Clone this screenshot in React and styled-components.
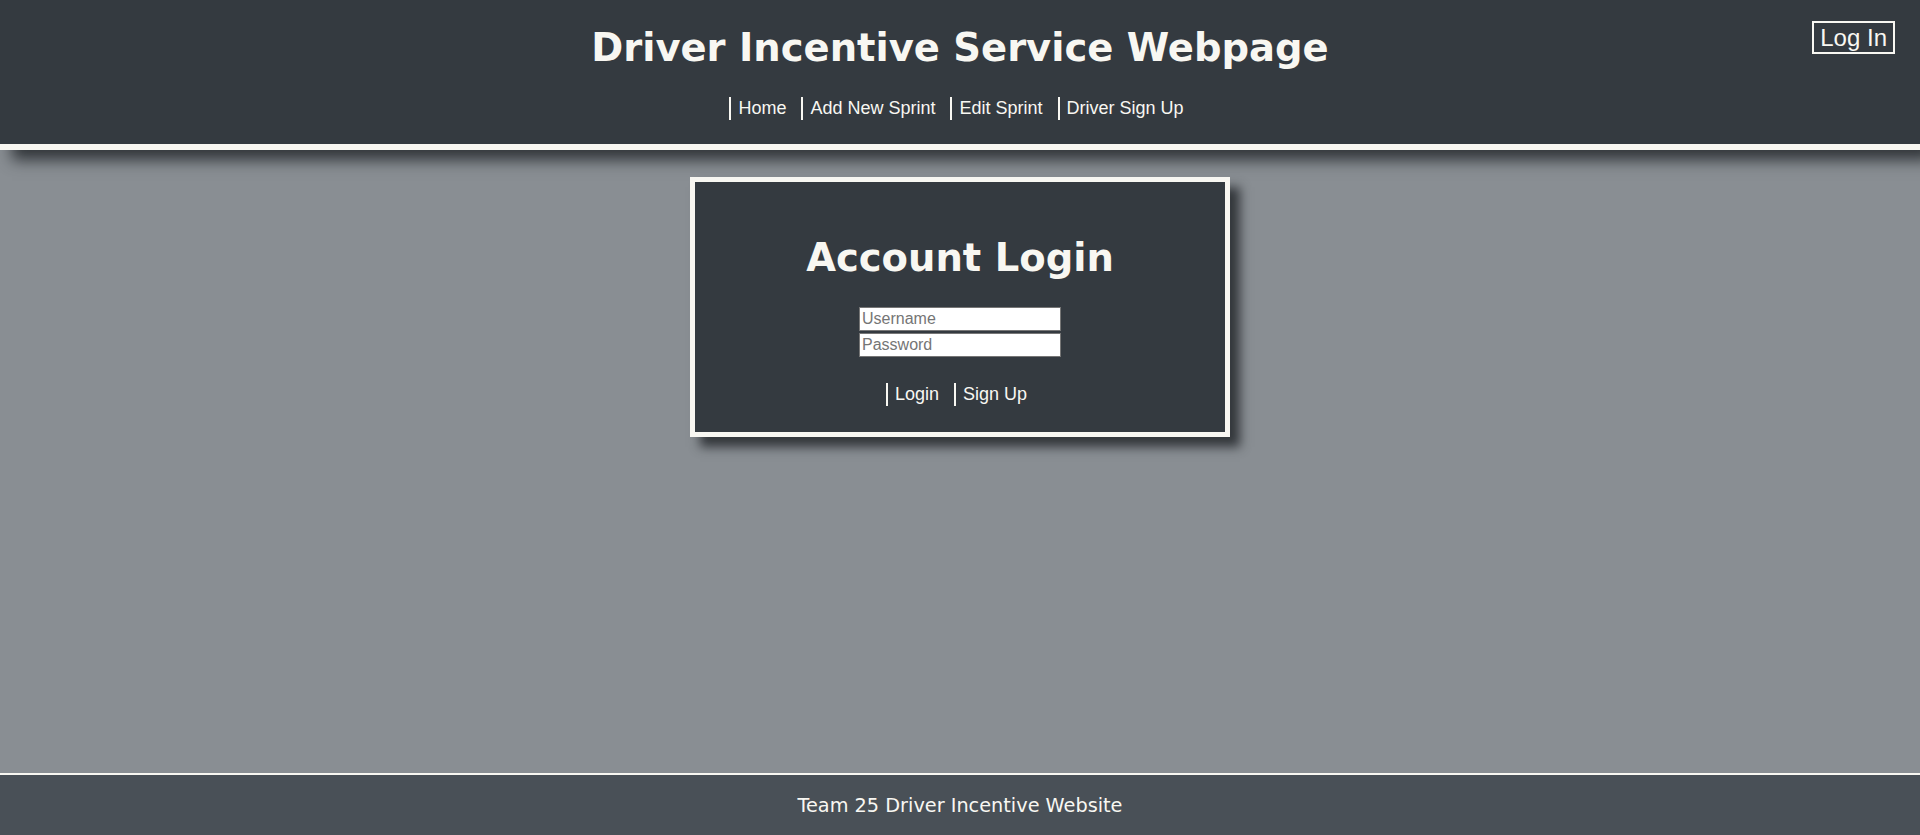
import styled, { createGlobalStyle } from "styled-components";

const GlobalStyle = createGlobalStyle`
    html, body {
        margin: 0;
        padding: 0;
        height: 100%;
    }
    body {
        background-color: #898e93;
        font-family: "Liberation Sans", Arial, sans-serif;
    }
    #root {
        min-height: 100vh;
    }
`;

const navLinks = ["Home", "Add New Sprint", "Edit Sprint", "Driver Sign Up"];
const formLinks = ["Login", "Sign Up"];

function App() {
    return (
        <Page>
            <GlobalStyle />
            <Header>
                <TitleRow>
                    <span></span>
                    <Title>Driver Incentive Service Webpage</Title>
                    <LogInButton>Log In</LogInButton>
                </TitleRow>
                <Nav>
                    {navLinks.map(link => (
                        <NavLink key={link} href="#">{link}</NavLink>
                    ))}
                </Nav>
            </Header>

            <Main>
                <LoginCard>
                    <CardTitle>Account Login</CardTitle>
                    <Fields>
                        <Input type="text" placeholder="Username" />
                        <Input type="password" placeholder="Password" />
                    </Fields>
                    <CardLinks>
                        {formLinks.map(link => (
                            <NavLink key={link} href="#">{link}</NavLink>
                        ))}
                    </CardLinks>
                </LoginCard>
            </Main>

            <Footer>Team 25 Driver Incentive Website</Footer>
        </Page>
    );
}

let Page = styled.div`
    min-height: 100vh;
    display: flex;
    flex-direction: column;
`;

let Header = styled.header`
    background-color: #343a40;
    border-bottom: 6px solid #f8f7f2;
    box-shadow: 12px 10px 14px rgba(20, 24, 28, 0.75);
    height: 144px;
    box-sizing: content-box;
    display: flex;
    flex-direction: column;
    position: relative;
    z-index: 2;
`;

let TitleRow = styled.div`
    display: grid;
    grid-template-columns: 1fr auto 1fr;
    align-items: start;
`;

let Title = styled.h1`
    margin: 25px 0 0;
    font-family: "DejaVu Sans", Verdana, sans-serif;
    font-weight: bold;
    font-size: 38.5px;
    line-height: 46px;
    color: #f8f7f2;
    text-align: center;
`;

let LogInButton = styled.button`
    justify-self: end;
    margin: 21px 25px 0 0;
    background: transparent;
    border: 2px solid #f8f7f2;
    color: #f8f7f2;
    font-family: "Liberation Sans", Arial, sans-serif;
    font-size: 24px;
    line-height: 27px;
    padding: 1px 6px;
    cursor: pointer;
`;

let Nav = styled.nav`
    margin-top: 26px;
    display: flex;
    justify-content: center;
    gap: 8px;
`;

let NavLink = styled.a`
    color: #f8f7f2;
    text-decoration: none;
    font-family: "Liberation Sans", Arial, sans-serif;
    font-size: 18px;
    line-height: 23px;
    border-left: 2px solid #f8f7f2;
    padding: 0 7px 0 7px;
`;

let Main = styled.main`
    flex: 1;
    display: flex;
    justify-content: center;
    align-items: flex-start;
    padding-top: 27px;
`;

let LoginCard = styled.section`
    width: 540px;
    box-sizing: border-box;
    background-color: #343a40;
    border: 5px solid #f8f7f2;
    box-shadow: 10px 10px 10px rgba(30, 34, 38, 0.8);
    padding: 53px 0 26px;
    display: flex;
    flex-direction: column;
    align-items: center;
`;

let CardTitle = styled.h1`
    margin: 0;
    font-family: "DejaVu Sans", Verdana, sans-serif;
    font-weight: bold;
    font-size: 38.5px;
    line-height: 46px;
    color: #f8f7f2;
`;

let Fields = styled.div`
    margin-top: 26px;
    display: flex;
    flex-direction: column;
    gap: 2px;
`;

let Input = styled.input`
    width: 202px;
    height: 24px;
    box-sizing: border-box;
    border: 1px solid #767676;
    padding: 1px 2px;
    font-family: "Liberation Sans", Arial, sans-serif;
    font-size: 16px;
    background: #fff;

    &::placeholder {
        color: #757575;
    }
`;

let CardLinks = styled.div`
    margin-top: 26px;
    display: flex;
    justify-content: center;
    gap: 8px;
`;

let Footer = styled.footer`
    background-color: #495057;
    border-top: 2px solid #f8f7f2;
    height: 60px;
    display: flex;
    align-items: center;
    justify-content: center;
    font-family: "DejaVu Sans", Verdana, sans-serif;
    font-size: 19.3px;
    color: #f8f7f2;
`;

export default App;
